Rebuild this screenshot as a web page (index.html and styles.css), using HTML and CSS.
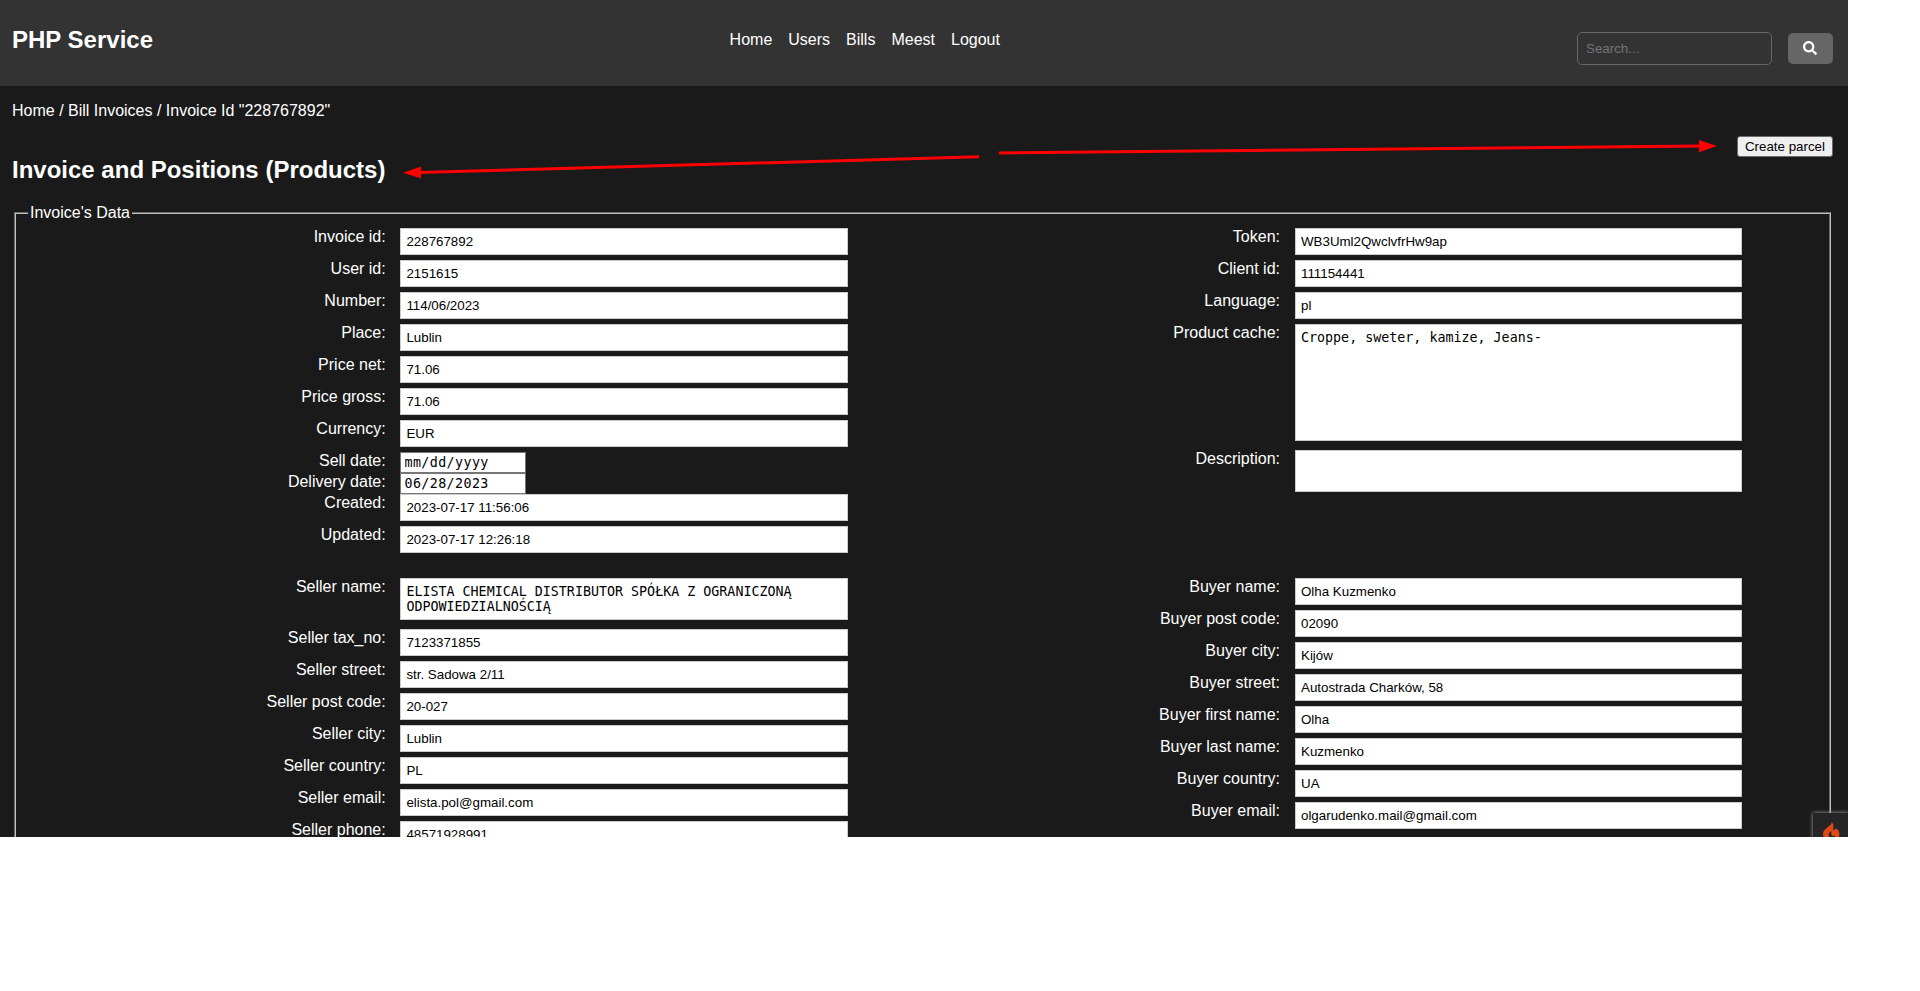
FILE: index.html
```html
<!DOCTYPE html>
<html lang="en">
<head>
<meta charset="utf-8">
<title>PHP Service</title>
<link rel="stylesheet" href="styles.css">
</head>
<body>
<div class="app">
  <header class="header">
    <h1 class="brand">PHP Service</h1>
    <nav class="nav"><a>Home</a><a>Users</a><a>Bills</a><a>Meest</a><a>Logout</a></nav>
    <form class="search">
      <input class="search-input" type="text" placeholder="Search...">
      <button class="search-btn" type="button" aria-label="Search">
        <svg width="14" height="14" viewBox="0 0 512 512"><path fill="#fff" d="M505 442.700 405.300 343c-4.500-4.500-10.600-7-17-7H372c27.600-35.300 44-79.700 44-128C416 93.100 322.900 0 208 0S0 93.100 0 208s93.100 208 208 208c48.300 0 92.700-16.400 128-44v16.300c0 6.400 2.500 12.500 7 17l99.700 99.700c9.400 9.400 24.600 9.400 33.900 0l28.300-28.300c9.400-9.400 9.400-24.600.1-34zM208 336c-70.700 0-128-57.200-128-128 0-70.700 57.200-128 128-128 70.700 0 128 57.200 128 128 0 70.700-57.200 128-128 128z"/></svg>
      </button>
    </form>
  </header>
  <main class="main">
    <div class="crumbs">Home / Bill Invoices / Invoice Id "228767892"</div>
    <div class="title-row">
      <h2 class="title">Invoice and Positions (Products)</h2>
      <button class="create" type="button">Create parcel</button>
    </div>
    <fieldset class="panel">
      <legend class="legend">Invoice's Data</legend>
      <div class="cols">
        <div class="col">
          <div class="row"><label>Invoice id:</label><input class="field" value="228767892"></div>
          <div class="row"><label>User id:</label><input class="field" value="2151615"></div>
          <div class="row"><label>Number:</label><input class="field" value="114/06/2023"></div>
          <div class="row"><label>Place:</label><input class="field" value="Lublin"></div>
          <div class="row"><label>Price net:</label><input class="field" value="71.06"></div>
          <div class="row"><label>Price gross:</label><input class="field" value="71.06"></div>
          <div class="row"><label>Currency:</label><input class="field" value="EUR"></div>
          <div class="row row-date row-sell"><label>Sell date:</label><input class="date" value="mm/dd/yyyy"></div>
          <div class="row row-date"><label>Delivery date:</label><input class="date" value="06/28/2023"></div>
          <div class="row"><label>Created:</label><input class="field" value="2023-07-17 11:56:06"></div>
          <div class="row"><label>Updated:</label><input class="field" value="2023-07-17 12:26:18"></div>
        </div>
        <div class="col col-right">
          <div class="row"><label>Token:</label><input class="field" value="WB3Uml2QwclvfrHw9ap"></div>
          <div class="row"><label>Client id:</label><input class="field" value="111154441"></div>
          <div class="row"><label>Language:</label><input class="field" value="pl"></div>
          <div class="row row-area"><label>Product cache:</label><textarea class="field area area-tall">Croppe, sweter, kamize, Jeans-</textarea></div>
          <div class="row row-area"><label>Description:</label><textarea class="field area"></textarea></div>
        </div>
      </div>
      <div class="cols cols-parties">
        <div class="col">
          <div class="row row-area"><label>Seller name:</label><textarea class="field area">ELISTA CHEMICAL DISTRIBUTOR SPÓŁKA Z OGRANICZONĄ ODPOWIEDZIALNOŚCIĄ</textarea></div>
          <div class="row"><label>Seller tax_no:</label><input class="field" value="7123371855"></div>
          <div class="row"><label>Seller street:</label><input class="field" value="str. Sadowa 2/11"></div>
          <div class="row"><label>Seller post code:</label><input class="field" value="20-027"></div>
          <div class="row"><label>Seller city:</label><input class="field" value="Lublin"></div>
          <div class="row"><label>Seller country:</label><input class="field" value="PL"></div>
          <div class="row"><label>Seller email:</label><input class="field" value="elista.pol@gmail.com"></div>
          <div class="row"><label>Seller phone:</label><input class="field" value="48571928991"></div>
        </div>
        <div class="col col-right">
          <div class="row"><label>Buyer name:</label><input class="field" value="Olha Kuzmenko"></div>
          <div class="row"><label>Buyer post code:</label><input class="field" value="02090"></div>
          <div class="row"><label>Buyer city:</label><input class="field" value="Kijów"></div>
          <div class="row"><label>Buyer street:</label><input class="field" value="Autostrada Charków, 58"></div>
          <div class="row"><label>Buyer first name:</label><input class="field" value="Olha"></div>
          <div class="row"><label>Buyer last name:</label><input class="field" value="Kuzmenko"></div>
          <div class="row"><label>Buyer country:</label><input class="field" value="UA"></div>
          <div class="row"><label>Buyer email:</label><input class="field" value="olgarudenko.mail@gmail.com"></div>
        </div>
      </div>
    </fieldset>
  </main>
  <svg class="arrows" width="1848" height="837" viewBox="0 0 1848 837">
    <g stroke="#f00" stroke-width="3" fill="none"><path d="M979 156.800 418 172.600"/><path d="M999 153 1701 146"/></g>
    <path fill="#f00" d="M403 172.800 421 166.500V178.500ZM1717 146 1699 140V152.300Z"/>
  </svg>
  <div class="debug">
    <svg width="17" height="22" viewBox="0 0 17 22"><path fill="#dd4814" d="M8.800 0C10.800 2.500 10.800 4.700 10 7.300C10.500 8.500 12 8 12.800 6.300C15 7.500 16.500 9.500 16.400 12C16.300 15.500 14.500 18 10.500 20.500C12.200 18 12.800 15.800 11.500 13.500C11 14.200 10.300 14.300 9.500 13.800C8 12.600 8 10.800 8.600 9C6 10.500 5 12.500 6.200 14.300C5 14.500 5 16.500 7 20.500C2.500 18.800 0 16 0 12.300C0 9 2 7.500 4.200 5.600C6.500 3.800 8.500 2.500 8.800 0Z"/></svg>
  </div>
</div>
</body>
</html>
```
FILE: styles.css
```css
* { box-sizing: border-box; }
body { margin: 0; background: #fff; font-family: "Liberation Sans", Arial, sans-serif; font-size: 16px; line-height: 18px; }
.app { position: relative; width: 1848px; height: 837px; overflow: hidden; background: #1a1a1a; color: #fff; }
.header { height: 86px; padding: 0 15px 0 12px; display: grid; grid-template-columns: 717.6px 1fr auto; align-items: start; background: #333; }
.brand { margin: 26px 0 0; font-size: 24px; line-height: 28px; }
.nav { display: flex; gap: 16px; padding-top: 31px; }
.search { display: flex; gap: 16px; padding-top: 32px; margin: 0; }
.search-input { width: 195px; height: 33px; padding: 0 8px; border: 1px solid #666; border-radius: 5px; background: #333; color: #fff; font: 13.333px "Liberation Sans", Arial, sans-serif; }
.search-input::placeholder { color: #757575; }
.search-btn { display: flex; align-items: center; justify-content: center; width: 45px; height: 31px; margin-top: 1px; padding: 0 1px 1px 0; border: 0; border-radius: 5px; background: #666; }
.main { padding: 16px 15px 0 12px; }
.crumbs { height: 34px; line-height: 18px; }
.title-row { display: flex; justify-content: space-between; align-items: flex-start; height: 68px; }
.title { margin: 20px 0 0; font-size: 24px; line-height: 28px; }
.create { width: 96px; height: 21px; padding: 0; border: 1px solid #6b6b6b; border-radius: 3px; background: #efefef; color: #000; font: 13.333px "Liberation Sans", Arial, sans-serif; }
.panel { margin: 0 2px; padding: 0 0 20px; width: 1817px; height: 900px; border: 2px groove #c0c0c0; }
.legend { margin-left: 12px; padding: 0 2px; height: 18px; }
.cols { display: flex; margin-top: 6px; height: 350px; }
.cols-parties { margin-top: 0; }
.col { width: 832px; }
.col-right { margin-left: 63px; width: 831px; }
.row { display: grid; grid-template-columns: 370px 1fr; column-gap: 14px; height: 32px; align-items: start; }
.row label { text-align: right; padding-right: .3px; }
.col-right label { padding-right: 1px; }
.field { width: 100%; height: 27px; padding: 0 5px 0 5.400px; border: 1px solid #ccc; border-radius: 0; background: #fff; color: #000; font: 13.333px "Liberation Sans", Arial, sans-serif; }
.col-right .field { padding-left: 5px; }
.row-area { height: auto; padding-bottom: 9px; }
.field.area { display: block; height: 42px; padding-top: 5px; padding-bottom: 5px; resize: none; overflow: hidden; font-family: "DejaVu Sans Mono", monospace; line-height: 15px; }
.field.area-tall { height: 117px; }
.row-date { height: 21px; }
.date { width: 126px; height: 21px; padding: 0 3px 0 3.500px; border: 1px solid #767676; border-radius: 0; background: #fff; color: #000; font: 13.333px "DejaVu Sans Mono", monospace; letter-spacing: .4px; }
.arrows { position: absolute; left: 0; top: 0; pointer-events: none; }
.debug { position: absolute; left: 1813px; top: 813px; width: 36px; height: 36px; padding: 9px 0 0 10px; background: #252525; box-shadow: 0 0 4px #aaa; }
.debug svg { display: block; }
```
